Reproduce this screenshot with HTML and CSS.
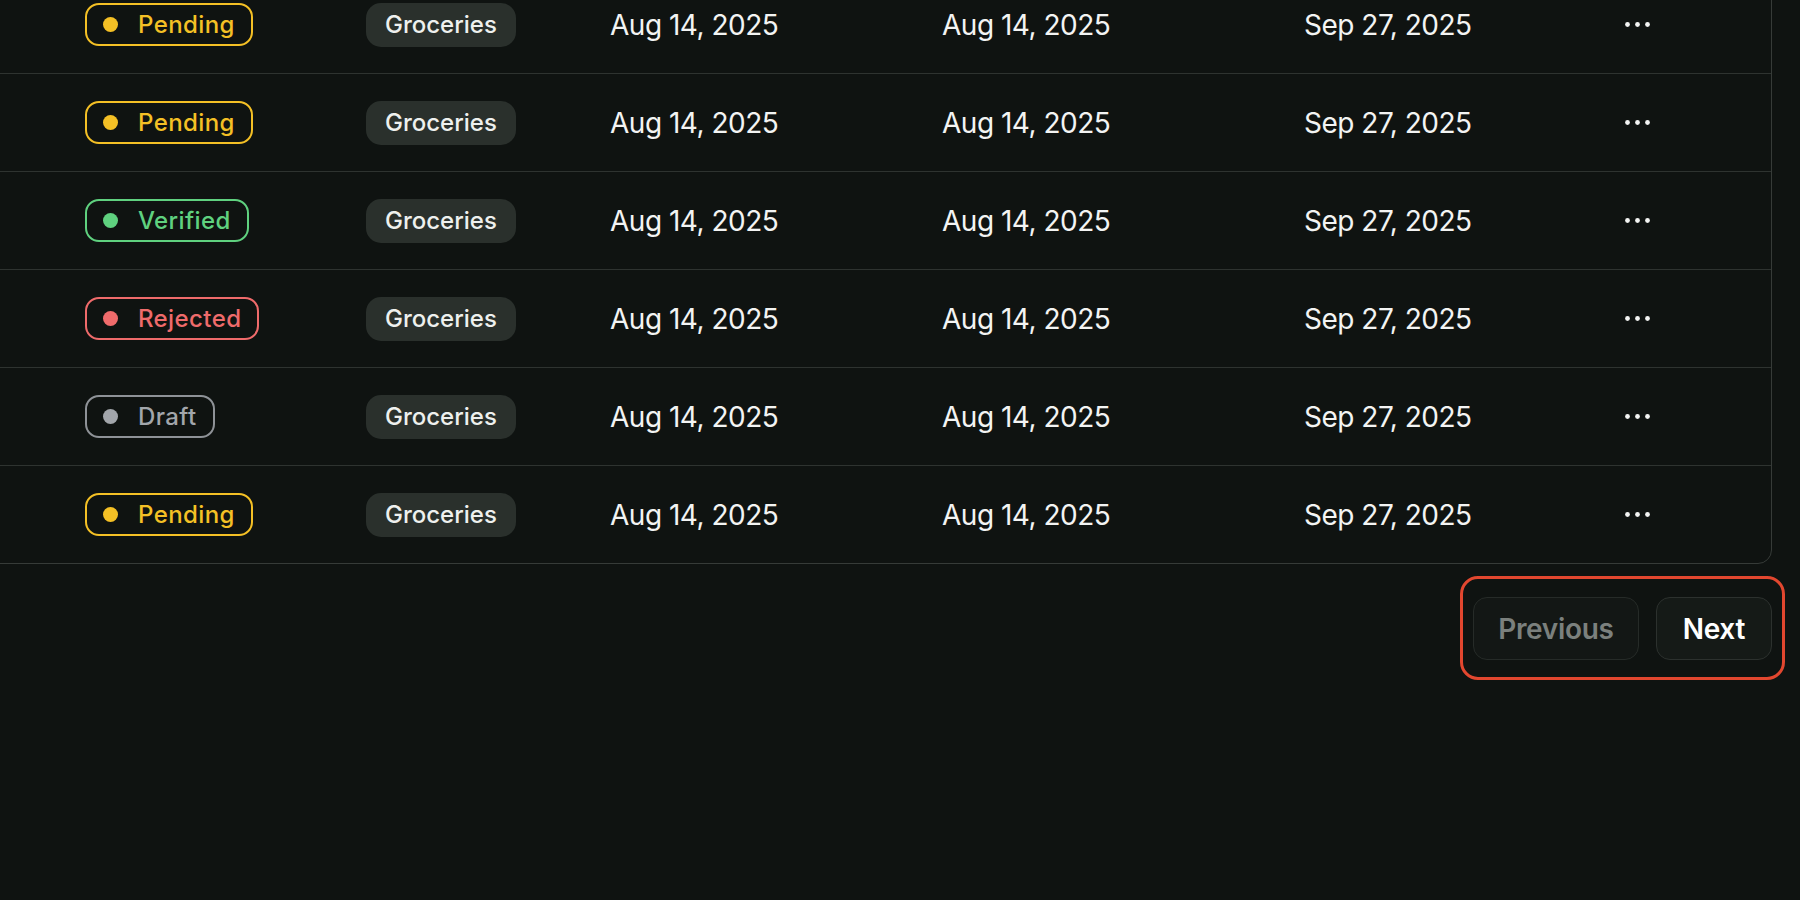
FILE: index.html
```html
<!DOCTYPE html>
<html lang="en">
<head>
<meta charset="utf-8">
<title>Receipts</title>
<link rel="stylesheet" href="styles.css">
</head>
<body>
<main class="page">
  <section class="table-card">
    <div class="row">
      <div class="cell"><span class="badge pending"><span class="dot"></span>Pending</span></div>
      <div class="cell"><span class="chip">Groceries</span></div>
      <div class="cell date">Aug 14, 2025</div>
      <div class="cell date">Aug 14, 2025</div>
      <div class="cell date">Sep 27, 2025</div>
      <div class="cell actions"><button class="more" aria-label="More"><svg width="25" height="5" viewBox="0 0 25 5"><circle cx="2.5" cy="2.5" r="2.4"/><circle cx="12.5" cy="2.5" r="2.4"/><circle cx="22.5" cy="2.5" r="2.4"/></svg></button></div>
    </div>
    <div class="row">
      <div class="cell"><span class="badge pending"><span class="dot"></span>Pending</span></div>
      <div class="cell"><span class="chip">Groceries</span></div>
      <div class="cell date">Aug 14, 2025</div>
      <div class="cell date">Aug 14, 2025</div>
      <div class="cell date">Sep 27, 2025</div>
      <div class="cell actions"><button class="more" aria-label="More"><svg width="25" height="5" viewBox="0 0 25 5"><circle cx="2.5" cy="2.5" r="2.4"/><circle cx="12.5" cy="2.5" r="2.4"/><circle cx="22.5" cy="2.5" r="2.4"/></svg></button></div>
    </div>
    <div class="row">
      <div class="cell"><span class="badge verified"><span class="dot"></span>Verified</span></div>
      <div class="cell"><span class="chip">Groceries</span></div>
      <div class="cell date">Aug 14, 2025</div>
      <div class="cell date">Aug 14, 2025</div>
      <div class="cell date">Sep 27, 2025</div>
      <div class="cell actions"><button class="more" aria-label="More"><svg width="25" height="5" viewBox="0 0 25 5"><circle cx="2.5" cy="2.5" r="2.4"/><circle cx="12.5" cy="2.5" r="2.4"/><circle cx="22.5" cy="2.5" r="2.4"/></svg></button></div>
    </div>
    <div class="row">
      <div class="cell"><span class="badge rejected"><span class="dot"></span>Rejected</span></div>
      <div class="cell"><span class="chip">Groceries</span></div>
      <div class="cell date">Aug 14, 2025</div>
      <div class="cell date">Aug 14, 2025</div>
      <div class="cell date">Sep 27, 2025</div>
      <div class="cell actions"><button class="more" aria-label="More"><svg width="25" height="5" viewBox="0 0 25 5"><circle cx="2.5" cy="2.5" r="2.4"/><circle cx="12.5" cy="2.5" r="2.4"/><circle cx="22.5" cy="2.5" r="2.4"/></svg></button></div>
    </div>
    <div class="row">
      <div class="cell"><span class="badge draft"><span class="dot"></span>Draft</span></div>
      <div class="cell"><span class="chip">Groceries</span></div>
      <div class="cell date">Aug 14, 2025</div>
      <div class="cell date">Aug 14, 2025</div>
      <div class="cell date">Sep 27, 2025</div>
      <div class="cell actions"><button class="more" aria-label="More"><svg width="25" height="5" viewBox="0 0 25 5"><circle cx="2.5" cy="2.5" r="2.4"/><circle cx="12.5" cy="2.5" r="2.4"/><circle cx="22.5" cy="2.5" r="2.4"/></svg></button></div>
    </div>
    <div class="row">
      <div class="cell"><span class="badge pending"><span class="dot"></span>Pending</span></div>
      <div class="cell"><span class="chip">Groceries</span></div>
      <div class="cell date">Aug 14, 2025</div>
      <div class="cell date">Aug 14, 2025</div>
      <div class="cell date">Sep 27, 2025</div>
      <div class="cell actions"><button class="more" aria-label="More"><svg width="25" height="5" viewBox="0 0 25 5"><circle cx="2.5" cy="2.5" r="2.4"/><circle cx="12.5" cy="2.5" r="2.4"/><circle cx="22.5" cy="2.5" r="2.4"/></svg></button></div>
    </div>
  </section>
  <nav class="pagination">
    <div class="pager">
      <button class="btn btn-prev">Previous</button>
      <button class="btn btn-next">Next</button>
    </div>
  </nav>
</main>
</body>
</html>
```
FILE: styles.css
```css
* { box-sizing: border-box; }

html, body {
  margin: 0;
  height: 100%;
}

body {
  background: #0f1311;
  color: #f2f3f2;
  font-family: "Inter", "Noto Sans", sans-serif;
  overflow: hidden;
}

.page {
  margin-top: -25px;
  padding-right: 28px;
}

.table-card {
  margin-left: -24px;
  border: 1px solid #363b38;
  border-radius: 14px;
}

.row {
  display: grid;
  grid-template-columns: 281px 244px 332px 362px 321px 1fr;
  align-items: center;
  height: 98px;
  padding-left: 108px;
  border-top: 1px solid #2e3330;
}

.row:first-child {
  border-top: 0;
  height: 97px;
}

.cell {
  display: flex;
  align-items: center;
}

.badge {
  display: inline-flex;
  align-items: center;
  gap: 20px;
  padding: 7px 16px;
  border: 2px solid currentColor;
  border-radius: 14px;
  font-size: 24px;
  line-height: 25px;
  font-weight: 500;
  letter-spacing: 0.4px;
}

.dot {
  width: 15px;
  height: 15px;
  border-radius: 50%;
  background: currentColor;
}

.pending { color: #f4c025; }
.verified { color: #5fd17f; }
.rejected { color: #ef6b6b; }
.draft { color: #a2a6ab; border-color: #8e9297; }

.chip {
  display: inline-block;
  padding: 9px 19px;
  border-radius: 15px;
  background: #2a302c;
  color: #eef0ee;
  font-size: 24px;
  line-height: 26px;
  font-weight: 500;
}

.date {
  font-size: 28px;
  font-weight: 400;
  letter-spacing: -0.5px;
  color: #f3f4f3;
}

.more {
  display: flex;
  padding: 0;
  border: 0;
  background: none;
  fill: #f3f4f3;
  cursor: pointer;
}

.pagination {
  display: flex;
  justify-content: flex-end;
  margin-top: 33px;
}

.pager {
  position: relative;
  display: flex;
  gap: 17px;
}

.pager::after {
  content: "";
  position: absolute;
  inset: -21px -13px -20px -13px;
  border: 3px solid #e2472f;
  border-radius: 18px;
  pointer-events: none;
}

.btn {
  height: 63px;
  padding: 0 26px;
  border: 1px solid #262b28;
  border-radius: 14px;
  background: #131715;
  font-family: inherit;
  font-size: 28px;
  font-weight: 600;
  letter-spacing: -0.3px;
}

.btn-prev {
  padding: 0 24px;
  color: #7b807d;
}

.btn-next {
  color: #ffffff;
  background: #151a17;
  border-color: #2c312e;
}
```
